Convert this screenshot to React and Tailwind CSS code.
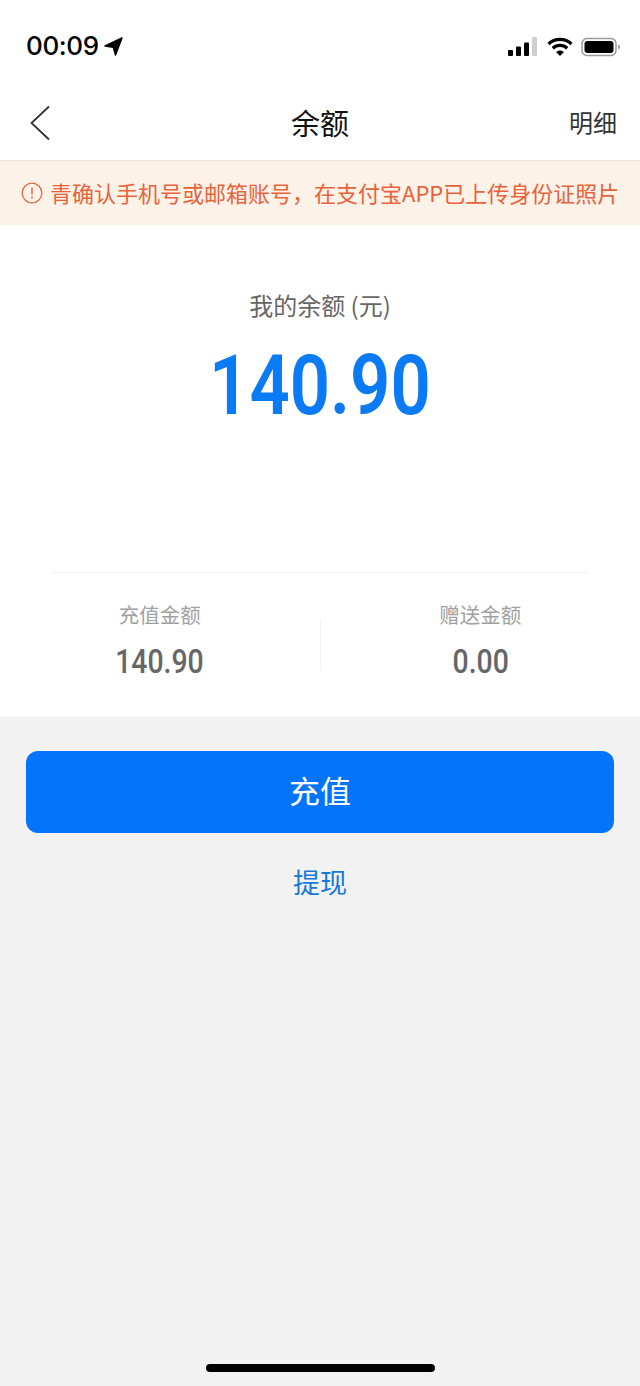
const CJK = "font-['Noto_Sans_CJK_SC','Noto_Sans_CJK_JP',sans-serif]";

function StatusBar() {
  return (
    <div className="h-[80px] pt-[32px] pl-[27px] pr-[19px] flex items-start justify-between">
      <div className="flex items-center h-[28px]">
        <span className="font-['Inter',sans-serif] font-medium text-[26px] leading-[28px] text-black tracking-[-0.4px] -ml-[1px]">00:09</span>
        <svg width="19" height="19" viewBox="0 0 19 19" className="ml-[5px]">
          <path d="M1 9 L18 1 L11.500 18 L9.300 10.200 Z" fill="#000" stroke="#000" strokeWidth="1.400" strokeLinejoin="round" />
        </svg>
      </div>
      <div className="flex items-center h-[30px]">
        <svg width="30" height="20" viewBox="0 0 30 20">
          <rect x="0" y="13" width="5" height="6" rx="1" fill="#000" />
          <rect x="8" y="9.500" width="5" height="9.500" rx="1" fill="#000" />
          <rect x="16" y="5.500" width="5" height="13.500" rx="1" fill="#000" />
          <rect x="24" y="0" width="5" height="19" rx="1" fill="#cfcfcf" />
        </svg>
        <svg width="26" height="20" viewBox="0 0 26 20" className="ml-[9px]">
          <path d="M1.500 7 C8 0.800 18 0.800 24.500 7" fill="none" stroke="#000" strokeWidth="3.200" />
          <path d="M5.800 11.300 C10 7.500 16 7.500 20.200 11.300" fill="none" stroke="#000" strokeWidth="3.200" />
          <path d="M9 15 L13 19 L17 15 C14.500 12.900 11.500 12.900 9 15 Z" fill="#000" />
        </svg>
        <svg width="40" height="20" viewBox="0 0 40 20" className="ml-[8px]">
          <rect x="1" y="1.500" width="34" height="17" rx="5" fill="none" stroke="#9a9a9a" strokeWidth="1.500" />
          <rect x="3.500" y="4" width="29" height="12" rx="3" fill="#000" />
          <path d="M37 7.500 C38.500 8 39 9 39 10 C39 11 38.500 12 37 12.500 Z" fill="#9a9a9a" />
        </svg>
      </div>
    </div>
  );
}

function NavBar() {
  return (
    <div className="h-[80px] pl-[30px] pr-[23px] flex items-center justify-between relative">
      <svg width="20" height="36" viewBox="0 0 20 36" className="mt-[5px]">
        <path d="M19 1.500 L1.500 18 L19 34.500" fill="none" stroke="#333" strokeWidth="1.800" />
      </svg>
      <span className={`absolute left-0 right-0 text-center text-[29px] leading-[40px] mt-[4px] text-[#111] ${CJK}`}>余额</span>
      <span className={`text-[24px] leading-[32px] mt-[4px] text-[#333] ${CJK}`}>明细</span>
    </div>
  );
}

function Banner() {
  return (
    <div className="h-[65px] bg-[#fdf2e8] border-t border-[#efe7e0] pl-[21px] flex items-center">
      <svg width="22" height="22" viewBox="0 0 22 22" className="shrink-0">
        <circle cx="11" cy="11" r="9.800" fill="none" stroke="#e9673f" strokeWidth="1.300" />
        <path d="M11 5.500 V12.500" stroke="#e9673f" strokeWidth="1.500" />
        <circle cx="11" cy="15.500" r="1" fill="#e9673f" />
      </svg>
      <span className={`ml-[7px] mb-[3px] whitespace-nowrap text-[22px] leading-[30px] text-[#e8623a] ${CJK}`}>
        青确认手机号或邮箱账号，在支付宝APP已上传身份证照片
      </span>
    </div>
  );
}

function Stat({ label, value }) {
  return (
    <div className="flex-1 flex flex-col items-center">
      <span className={`text-[20.500px] leading-[28px] text-[#a0a0a0] ${CJK}`}>{label}</span>
      <span className="mt-[14px] font-['Roboto',sans-serif] font-medium text-[33px] leading-[40px] text-[#666] scale-x-[0.86]">{value}</span>
    </div>
  );
}

function Summary() {
  return (
    <div className="h-[492px] bg-white flex flex-col items-center">
      <span className={`mt-[63px] text-[24px] leading-[34px] text-[#666] ${CJK}`}>我的余额 (元)</span>
      <span className="mt-[14px] font-['Roboto',sans-serif] font-semibold text-[84px] leading-[100px] text-[#0a7bf5] scale-x-[0.84]">140.90</span>
      <div className="mt-[136px] w-[538px] h-px bg-[#f2f2f2]" />
      <div className="w-full flex relative pt-[27px]">
        <Stat label="充值金额" value="140.90" />
        <div className="w-px h-[52px] bg-[#f3f3f3] mt-[19px]" />
        <Stat label="赠送金额" value="0.00" />
      </div>
    </div>
  );
}

export default function App() {
  return (
    <div className="w-[640px] h-[1386px] bg-white flex flex-col overflow-hidden">
      <StatusBar />
      <NavBar />
      <Banner />
      <Summary />
      <div className="flex-1 bg-[#f2f2f2] flex flex-col items-center px-[26px] pt-[34px] pb-[14px]">
        <button className={`w-full h-[82px] rounded-[12px] bg-[#0474fb] text-white text-[31px] leading-none pb-[6px] ${CJK}`}>充值</button>
        <span className={`mt-[29px] text-[27px] leading-[40px] text-[#1678d8] ${CJK}`}>提现</span>
        <div className="mt-auto w-[229px] h-[8px] rounded-full bg-black" />
      </div>
    </div>
  );
}
